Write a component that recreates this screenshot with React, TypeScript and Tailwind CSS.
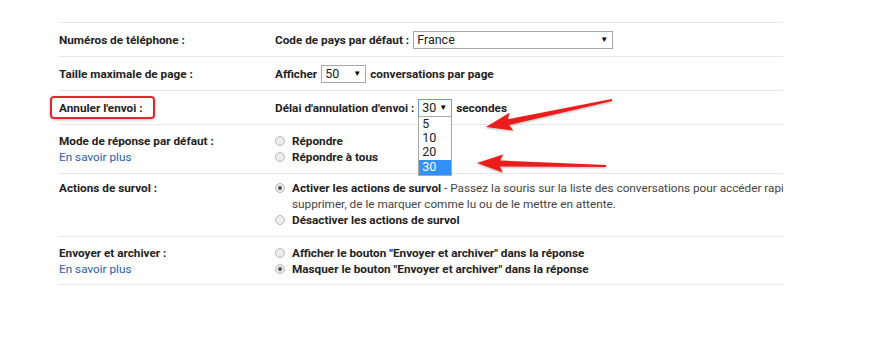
import React from "react";

function arrowPoints(tx: number, ty: number, hx: number, hy: number, tailW: number, shaftW: number, headW: number, headL: number) {
  const dx = hx - tx;
  const dy = hy - ty;
  const len = Math.sqrt(dx * dx + dy * dy);
  const ux = dx / len;
  const uy = dy / len;
  const nx = -uy;
  const ny = ux;
  const bx = hx - ux * headL;
  const by = hy - uy * headL;
  const pts: [number, number][] = [
    [tx + (nx * tailW) / 2, ty + (ny * tailW) / 2],
    [bx + (nx * shaftW) / 2, by + (ny * shaftW) / 2],
    [bx - ux * 3 + (nx * headW) / 2, by - uy * 3 + (ny * headW) / 2],
    [hx, hy],
    [bx - ux * 3 - (nx * headW) / 2, by - uy * 3 - (ny * headW) / 2],
    [bx - (nx * shaftW) / 2, by - (ny * shaftW) / 2],
    [tx - (nx * tailW) / 2, ty - (ny * tailW) / 2],
  ];
  return pts.map((p) => p.map((v) => v.toFixed(1)).join(",")).join(" ");
}

function Radio({ checked }: { checked?: boolean }) {
  return (
    <span className="inline-flex h-[10px] w-[10px] shrink-0 items-center justify-center rounded-full border border-[#b8b8b8] bg-[#ececec]">
      {checked && <span className="h-[4px] w-[4px] rounded-full bg-[#555]" />}
    </span>
  );
}

function Select({ value, w, focus }: { value: string; w: string; focus?: boolean }) {
  return (
    <span
      className={`inline-flex h-[18px] items-center justify-between border bg-white pl-[3px] pr-[4px] font-normal text-[12.5px] text-[#222] ${w} ${
        focus ? "border-[#6d9be0]" : "border-[#a9a9a9]"
      }`}
    >
      <span>{value}</span>
      <span className="text-[8px] text-black">▼</span>
    </span>
  );
}

export default function App() {
  return (
    <div
      className="relative h-[358px] w-[871px] overflow-hidden bg-white text-[11.75px] leading-4 text-[#222]"
      style={{ fontFamily: "Roboto, 'Liberation Sans', sans-serif" }}
    >
      <div className="ml-[59px] mt-[22px] w-[724px] overflow-hidden border-t border-[#e6e6e6]">
        {/* Row 1 */}
        <div className="flex h-[34px] items-center border-b border-[#e6e6e6]">
          <div className="w-[216px] font-bold">Numéros de téléphone :</div>
          <div className="flex items-center gap-[4px] font-bold">
            <span>Code de pays par défaut :</span>
            <Select value="France" w="w-[200px]" />
          </div>
        </div>
        {/* Row 2 */}
        <div className="flex h-[34px] items-center border-b border-[#e6e6e6]">
          <div className="w-[216px] font-bold">Taille maximale de page :</div>
          <div className="flex items-center gap-[4px] font-bold">
            <span>Afficher</span>
            <Select value="50" w="w-[45px]" />
            <span>conversations par page</span>
          </div>
        </div>
        {/* Row 3 */}
        <div className="flex h-[34px] items-center border-b border-[#e6e6e6]">
          <div className="w-[216px] font-bold">Annuler l'envoi :</div>
          <div className="flex items-center gap-[4px] font-bold">
            <span>Délai d'annulation d'envoi :</span>
            <span className="relative">
              <Select value="30" w="w-[34px]" focus />
              <span className="absolute left-0 top-[17px] z-10 flex w-[34px] flex-col border border-[#a9a9a9] bg-white font-normal text-[12.5px] leading-[14px] text-[#222]">
                <span className="h-[14px] pl-[3px]">5</span>
                <span className="h-[14px] pl-[3px]">10</span>
                <span className="h-[15px] pl-[3px]">20</span>
                <span className="h-[15px] bg-[#3390ff] pl-[3px] text-white">30</span>
              </span>
            </span>
            <span>secondes</span>
          </div>
        </div>
        {/* Row 4 */}
        <div className="flex h-[49px] border-b border-[#e6e6e6] pt-2">
          <div className="w-[216px]">
            <div className="font-bold">Mode de réponse par défaut :</div>
            <div className="text-[#2a5db0]">En savoir plus</div>
          </div>
          <div className="flex flex-col font-bold">
            <div className="flex items-center gap-[7px]">
              <Radio />
              <span>Répondre</span>
            </div>
            <div className="flex items-center gap-[7px]">
              <Radio />
              <span>Répondre à tous</span>
            </div>
          </div>
        </div>
        {/* Row 5 */}
        <div className="flex h-[63px] border-b border-[#e6e6e6] pt-[6px]">
          <div className="w-[216px] shrink-0 font-bold">Actions de survol :</div>
          <div className="flex min-w-0 flex-col">
            <div className="flex items-center gap-[7px] whitespace-nowrap">
              <Radio checked />
              <span>
                <span className="font-bold">Activer les actions de survol</span>
                <span className="text-[#444]"> - Passez la souris sur la liste des conversations pour accéder rapidement aux options permettant d'archiver, de</span>
              </span>
            </div>
            <div className="whitespace-nowrap pl-[17px] text-[#444]">
              supprimer, de le marquer comme lu ou de le mettre en attente.
            </div>
            <div className="flex items-center gap-[7px] font-bold">
              <Radio />
              <span>Désactiver les actions de survol</span>
            </div>
          </div>
        </div>
        {/* Row 6 */}
        <div className="flex h-[48px] border-b border-[#e6e6e6] pt-2">
          <div className="w-[216px]">
            <div className="font-bold">Envoyer et archiver :</div>
            <div className="text-[#2a5db0]">En savoir plus</div>
          </div>
          <div className="flex flex-col font-bold">
            <div className="flex items-center gap-[7px]">
              <Radio />
              <span>Afficher le bouton "Envoyer et archiver" dans la réponse</span>
            </div>
            <div className="flex items-center gap-[7px]">
              <Radio checked />
              <span>Masquer le bouton "Envoyer et archiver" dans la réponse</span>
            </div>
          </div>
        </div>
      </div>

      {/* Red highlight box */}
      <div className="absolute left-[50px] top-[96px] h-[23px] w-[105px] rounded-[4px] border-2 border-[#e3262b] shadow-[0_1px_3px_rgba(0,0,0,0.25)]" />

      {/* Arrows */}
      <svg className="pointer-events-none absolute left-0 top-0" width="871" height="358">
        <defs>
          <filter id="sh" x="-10%" y="-50%" width="120%" height="200%">
            <feDropShadow dx="0" dy="1" stdDeviation="1" floodColor="#000" floodOpacity="0.3" />
          </filter>
        </defs>
        <polygon points={arrowPoints(612, 100, 486, 127, 2, 6, 18, 23)} fill="#ea1c1c" filter="url(#sh)" />
        <polygon points={arrowPoints(606, 166, 477, 163, 2, 6, 18, 23)} fill="#ea1c1c" filter="url(#sh)" />
      </svg>
    </div>
  );
}
